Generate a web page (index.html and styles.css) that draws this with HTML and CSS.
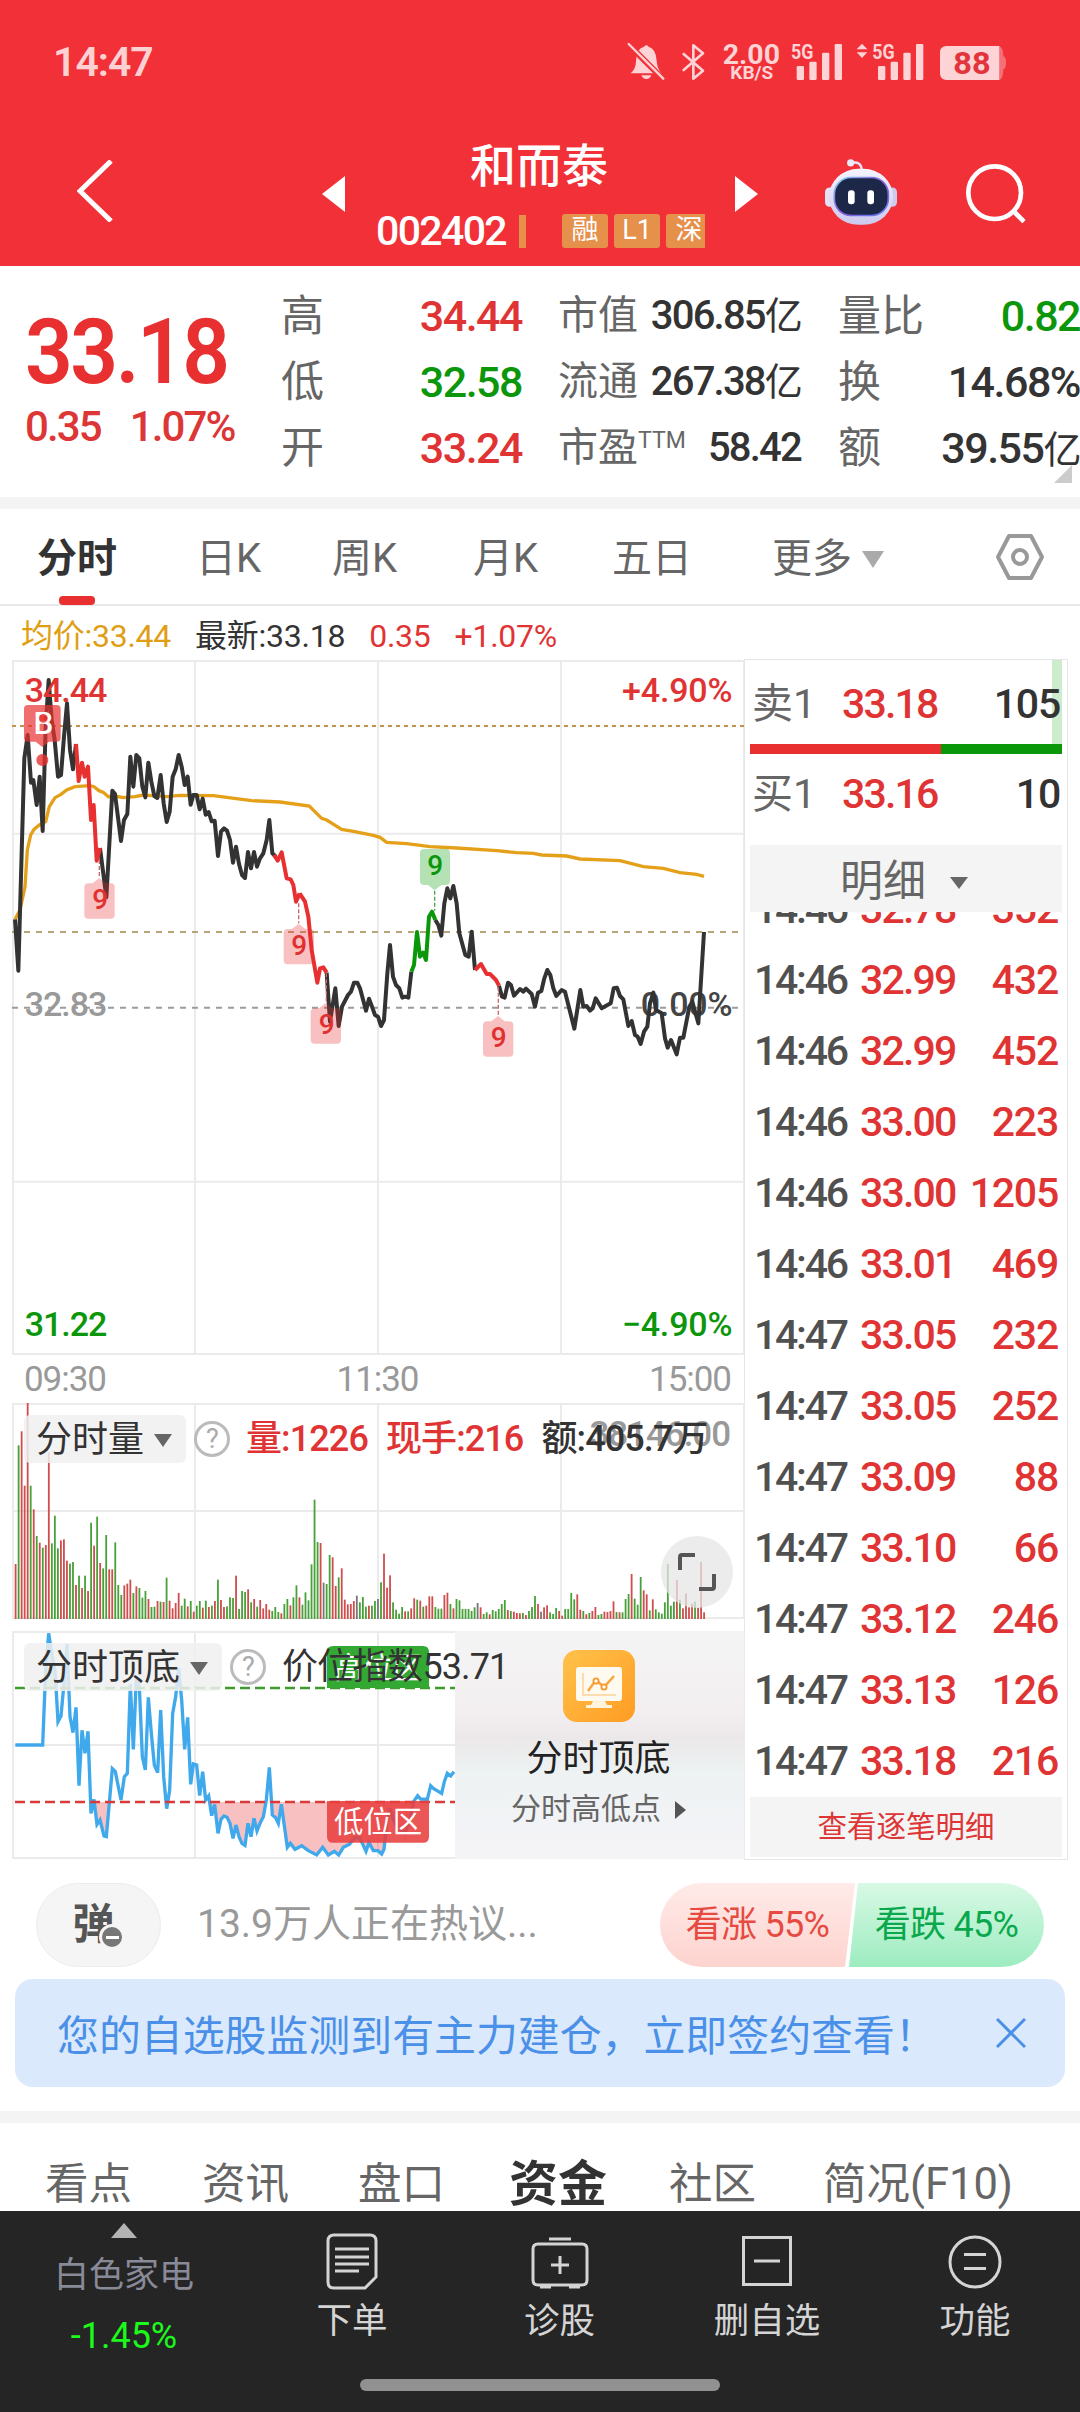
FILE: index.html
```html
<!DOCTYPE html>
<html lang="zh-CN">
<head>
  <meta charset="UTF-8">
  <title>和而泰 002402</title>
  <link rel="stylesheet" href="styles.css">
</head>
<body>

  <!-- Header -->
  <header class="header">
    <div class="status-bar">
      <span class="clock">14:47</span>
      <svg class="status-icons" viewBox="0 0 1230 210">
        <g class="soft">
          <path d="M62 130 Q78 116 78 92 Q80 54 102 50 Q109 42 116 50 Q138 56 140 92 Q142 116 154 130 Z"/>
          <path d="M94 136 H124 Q120 147 109 147 Q98 147 94 136 Z"/>
        </g>
        <path d="M50 38 L162 150" stroke="#f13038" stroke-width="18"/>
        <path class="soft-line" d="M56 42 L160 146" stroke-width="7"/>
        <path class="soft-line" d="M221 72 L279 122 L250 146 V46 L279 70 L221 120" stroke-width="8"/>
        <g class="soft">
          <text x="338" y="101" font-size="82" textLength="172" lengthAdjust="spacingAndGlyphs">2.00</text>
          <text x="361" y="148" font-size="54" textLength="129" lengthAdjust="spacingAndGlyphs">KB/S</text>
          <text x="543" y="87" font-size="60" textLength="67" lengthAdjust="spacingAndGlyphs">5G</text>
          <rect x="560" y="108" width="22" height="42" rx="4"/>
          <rect x="598" y="95" width="22" height="55" rx="4"/>
          <rect x="636" y="68" width="22" height="82" rx="4"/>
          <rect x="674" y="42" width="22" height="108" rx="4"/>
          <path d="M756 41 L772 58 H740 Z M756 84 L772 67 H740 Z"/>
          <text x="787" y="87" font-size="60" textLength="67" lengthAdjust="spacingAndGlyphs">5G</text>
          <rect x="804" y="108" width="22" height="42" rx="4"/>
          <rect x="842" y="95" width="22" height="55" rx="4"/>
          <rect x="880" y="68" width="22" height="82" rx="4"/>
          <rect x="918" y="42" width="22" height="108" rx="4"/>
          <path d="M1010 48 H1168 V150 H1010 Q990 150 990 130 V68 Q990 48 1010 48 Z"/>
          <path opacity=".4" d="M1168 48 Q1180 54 1180 78 Q1188 80 1188 98 Q1188 116 1180 118 Q1180 146 1168 150 Z"/>
        </g>
        <text x="1030" y="133" font-size="92" fill="#e2343b" font-weight="700" textLength="112" lengthAdjust="spacingAndGlyphs">88</text>
      </svg>
    </div>
    <div class="title-bar">
      <svg class="back" viewBox="0 0 36 62"><path d="M34 1 L3 31 L34 61"/></svg>
      <span class="arrow-left"></span>
      <div class="stock">
        <h1>和而泰</h1>
        <div class="stock-code">
          <span class="num">002402</span>
          <i class="code-bar"></i>
          <div class="tags"><b>融</b><b>L1</b><b>深</b></div>
        </div>
      </div>
      <span class="arrow-right"></span>
      <svg class="robot" viewBox="0 0 216 200">
        <defs>
          <linearGradient id="shell" x1="0" y1="0" x2="0" y2="1">
            <stop offset="0" stop-color="#f4f3fd"/>
            <stop offset="1" stop-color="#cdc9ee"/>
          </linearGradient>
          <linearGradient id="rim" x1="0" y1="0" x2="1" y2="1">
            <stop offset="0" stop-color="#7fd0f0"/>
            <stop offset=".5" stop-color="#8b5ae0"/>
            <stop offset="1" stop-color="#5f7df0"/>
          </linearGradient>
        </defs>
        <path d="M78 14 Q110 8 110 36" fill="none" stroke="#e6e2f8" stroke-width="7"/>
        <circle cx="77" cy="14" r="11" fill="#eceafa"/>
        <rect x="0" y="88" width="30" height="58" rx="14" fill="#e4e1f6"/>
        <rect x="186" y="88" width="30" height="58" rx="14" fill="#cfcbf0"/>
        <rect x="12" y="32" width="192" height="168" rx="88" fill="url(#shell)"/>
        <rect x="28" y="58" width="162" height="114" rx="50" fill="#1d2747" stroke="url(#rim)" stroke-width="5"/>
        <rect x="69" y="96" width="20" height="42" rx="9" fill="#fff"/>
        <rect x="127" y="96" width="20" height="42" rx="9" fill="#fff"/>
      </svg>
      <svg class="search" viewBox="0 0 180 180">
        <circle cx="86" cy="86" r="79"/>
        <path d="M143 142 L174 173"/>
      </svg>
    </div>
  </header>

  <!-- Quote -->
  <section class="quote">
    <div class="price-box">
      <div class="price num">33.18</div>
      <div class="change num"><span>0.35</span><span>1.07%</span></div>
    </div>
    <dl class="stats stats-a">
      <dt>高</dt><dd class="red">34.44</dd>
      <dt>低</dt><dd class="green">32.58</dd>
      <dt>开</dt><dd class="red">33.24</dd>
    </dl>
    <dl class="stats stats-b">
      <dt>市值</dt><dd>306.85<small>亿</small></dd>
      <dt>流通</dt><dd>267.38<small>亿</small></dd>
      <dt>市盈<sup>TTM</sup></dt><dd>58.42</dd>
    </dl>
    <dl class="stats stats-c">
      <dt>量比</dt><dd class="green">0.82</dd>
      <dt>换</dt><dd>14.68%</dd>
      <dt>额</dt><dd>39.55<small>亿</small></dd>
    </dl>
    <i class="corner"></i>
  </section>

  <nav class="period-tabs">
    <span class="active">分时</span>
    <span>日K</span>
    <span>周K</span>
    <span>月K</span>
    <span>五日</span>
    <span>更多<i class="caret"></i></span>
    <svg class="hex" viewBox="0 0 48 46">
      <path d="M13 2 H35 L46 23 L35 44 H13 L2 23 Z"/>
      <circle cx="24" cy="23" r="7"/>
    </svg>
  </nav>

  <div class="legend">
    <span class="gold">均价:33.44</span>
    <span>最新:33.18</span>
    <span class="red">0.35</span>
    <span class="red">+1.07%</span>
  </div>

  <!-- Charts and order book -->
  <main class="board">
    <div class="charts">
      <svg class="chart-price" viewBox="36 60 2199 2085">
        <g class="grid">
          <path d="M39 63 H2232 V2142 H39 Z M585 63 V2142 M1134 63 V2142 M1683 63 V2142 M39 581 H2232 M39 1625 H2232"/>
        </g>
        <path class="dash" d="M36 258 H2232" stroke="#c5914f" stroke-dasharray="12 12"/>
        <path class="dash" d="M36 876 H2220" stroke="#b8a479" stroke-dasharray="18 18"/>
        <path class="dash" d="M36 1103 H2220" stroke="#9c9c9c" stroke-dasharray="18 18"/>
        <text x="74" y="1128" fill="#999">32.83</text>
        <text class="pct" x="2197" y="1128" fill="#444">0.00%</text>

        <polyline class="avg" points="45,838 60,810 75,740 82,630 92,585 102,568 118,555 137,545 148,500 165,473 183,463 200,450 225,440 270,437 282,440 297,452 310,457 325,470 345,468 370,473 405,470 430,465 455,467 500,470 540,466 640,467 680,472 755,482 840,486 928,498 965,535 980,540 1025,568 1060,574 1120,586 1140,592 1160,607 1220,611 1290,620 1370,624 1490,632 1550,638 1600,640 1625,645 1700,648 1740,657 1860,662 1930,680 1990,685 2040,698 2090,703 2112,709"/>
        <g class="line">
          <polyline points="45,838 55,992 73,355 83,285 93,428 100,420 110,495 119,410 128,573 137,260 146,120 155,240 164,300 174,410 183,405 192,290 201,190 210,330 219,388 228,312"/>
          <polyline points="300,624 319,772 337,452 345,462 363,603 372,540 382,522 391,350 400,440 409,345 418,355 427,440 436,472 445,368 454,425 463,468 472,474 482,405 491,490 500,546 509,515 518,410 527,388 536,345 545,380 554,435 563,410 572,494 580,465 590,465 599,508 608,476 617,524 626,516 635,544 644,542 654,648 663,575 672,565 681,572 690,600 699,668 708,620 717,672 726,705 735,714 744,636 753,685 762,636 771,680 780,655 790,640 800,600 808,540 817,640 828,650"/>
          <polyline points="980,998 990,1145 1006,1045 1016,1158 1026,1100 1044,1065 1053,1055 1062,1028 1072,1028 1080,1045 1098,1112 1107,1076 1116,1100 1125,1125 1134,1130 1143,1158 1152,1140 1162,1000 1170,915 1179,1010 1188,1035 1198,1045 1207,1073 1216,1070 1225,1073 1234,995"/>
          <polyline points="1306,840 1315,855 1324,887 1333,790 1342,745 1351,775 1360,738 1370,790 1378,880 1396,945 1406,950 1415,875 1425,990"/>
          <polyline points="1497,1037 1506,1070 1514,1073 1524,1028 1533,1035 1542,1067 1560,1047 1570,1055 1578,1046 1595,1062 1605,1100 1614,1058 1624,1053 1633,1015 1642,990 1651,1005 1660,1045 1669,1068 1685,1050 1695,1055 1723,1166 1741,1050 1750,1100 1760,1098 1770,1112 1778,1105 1787,1075 1805,1105 1832,1090 1841,1045 1851,1043 1860,1068 1870,1078 1885,1158 1895,1143 1905,1185 1913,1190 1922,1212 1932,1175 1942,1160 1950,1090 1960,1058 1968,1110 1985,1120 1995,1195 2003,1223 2013,1200 2030,1243 2040,1193 2050,1193 2068,1100 2077,1085 2095,1150 2112,876"/>
          <g class="down">
            <polyline points="228,312 236,423 246,368 254,410 264,380 273,540 281,495 290,662 300,624"/>
            <polyline points="822,645 833,662 845,637 860,715 872,718 880,735 888,785 899,760"/>
            <polyline points="899,760 915,785 925,830 935,930 952,1028 960,985 970,982 980,998"/>
            <polyline points="1425,990 1443,972 1460,1002 1470,1002 1488,1020 1497,1037"/>
          </g>
          <polyline class="up" points="1234,995 1242,975 1251,876 1260,950 1269,938 1278,960 1287,830 1296,815 1306,840"/>
        </g>

        <text x="74" y="187" fill="#e03434">34.44</text>
        <text class="pct" x="2197" y="187" fill="#e03434">+4.90%</text>
        <text x="74" y="2087" fill="#0b960b">31.22</text>
        <text class="pct" x="2197" y="2087" fill="#0b960b">−4.90%</text>

        <!-- buy marker -->
        <g fill="#e83030">
          <path opacity=".7" d="M84 195 H170 Q182 195 182 207 V293 Q182 305 170 305 H147 L127 321 L107 305 H84 Q72 305 72 293 V207 Q72 195 84 195 Z"/>
          <circle cx="127" cy="360" r="18" opacity=".8"/>
        </g>
        <text x="129" y="281" fill="#fff" font-size="94" text-anchor="middle">B</text>
        <circle cx="130" cy="235" r="13" fill="#e83030" opacity=".8"/>

        <!-- nine-turn markers -->
        <g class="nine nine-red">
          <path class="stem" d="M298 660 V714 M896 790 V850 M979 1000 V1090 M1495 1040 V1126"/>
          <path d="M265 730 H278 L298 714 L318 730 H332 Q344 730 344 742 V824 Q344 836 332 836 H265 Q253 836 253 824 V742 Q253 730 265 730 Z"/>
          <path transform="translate(598 137)" d="M265 730 H278 L298 714 L318 730 H332 Q344 730 344 742 V824 Q344 836 332 836 H265 Q253 836 253 824 V742 Q253 730 265 730 Z"/>
          <path transform="translate(679 375)" d="M265 730 H278 L298 714 L318 730 H332 Q344 730 344 742 V824 Q344 836 332 836 H265 Q253 836 253 824 V742 Q253 730 265 730 Z"/>
          <path transform="translate(1196 414)" d="M265 730 H278 L298 714 L318 730 H332 Q344 730 344 742 V824 Q344 836 332 836 H265 Q253 836 253 824 V742 Q253 730 265 730 Z"/>
          <text x="299" y="808">9</text>
          <text x="896" y="945">9</text>
          <text x="979" y="1183">9</text>
          <text x="1495" y="1222">9</text>
        </g>
        <g class="nine nine-green">
          <path class="stem" d="M1304 752 V812"/>
          <path d="M1272 627 H1338 Q1350 627 1350 639 V723 Q1350 735 1338 735 H1324 L1304 751 L1284 735 H1272 Q1260 735 1260 723 V639 Q1260 627 1272 627 Z"/>
          <text x="1304" y="706">9</text>
        </g>
      </svg>

      <div class="time-axis num"><span>09:30</span><span>11:30</span><span>15:00</span></div>

      <div class="panel volume">
        <svg id="volume" viewBox="12 1403 733 217">
          <path class="grid-thin" d="M13 1404 H744 V1618 H13 Z M195 1404 V1618 M378 1404 V1618 M561 1404 V1618 M13 1511 H744"/>
          <text x="730" y="1446" fill="#999" font-size="35" text-anchor="end">38146.00</text>
        </svg>
        <div class="panel-head">
          <button class="chip">分时量<i class="caret"></i></button>
          <span class="help">?</span>
          <span class="red">量:1226</span>
          <span class="red">现手:216</span>
          <span>额:405.7万</span>
        </div>
        <button class="expand" aria-label="全屏">
          <svg viewBox="0 0 38 38"><path d="M2 17 V4 Q2 2 4 2 H17 M36 21 V34 Q36 36 34 36 H21"/></svg>
        </button>
      </div>

      <div class="panel index">
        <svg viewBox="36 63 2199 684">
          <defs>
            <clipPath id="low"><rect x="0" y="576" width="1365" height="200"/></clipPath>
            <clipPath id="high"><rect x="0" y="0" width="1365" height="234"/></clipPath>
          </defs>
          <path class="grid" d="M39 66 H2232 V744 H39 Z M585 66 V744 M1134 66 V744 M39 405 H2232"/>
          <g clip-path="url(#low)">
            <polygon fill="#e83030" fill-opacity=".3" points="264,364 273,610 282,568 291,643 300,630 312,678 319,680 337,476 618,570 626,558 635,617 644,583 654,670 663,628 672,618 681,622 690,640 699,685 708,645 717,680 726,700 735,706 744,640 753,680 762,625 771,663 780,640 790,620 799,570 808,472 817,615 826,622 835,640 844,583 862,712 871,700 885,718 905,707 925,722 950,735 968,712 985,735 1003,724 1016,735 1030,712 1048,703 1065,682 1080,685 1098,724 1107,698 1120,722 1134,722 1145,732 1152,718 1160,640 1170,595 1180,630 1190,650 1215,670 1230,630 1241,570"/>
          </g>
          <g clip-path="url(#high)">
            <polygon fill="#2aa82a" fill-opacity=".35" points="128,405 137,180 146,70 155,130 165,180 174,335 183,318 192,220 201,102 210,320"/>
          </g>
          <polyline class="index-line" points="46,405 128,405 137,180 146,70 155,130 165,180 174,335 183,318 192,220 201,102 210,320 219,368 228,292 237,527 246,361 255,430 264,364 273,610 282,568 291,643 300,630 312,678 319,680 337,476 346,485 363,570 373,500 382,490 391,222 400,418 409,200 418,230 427,440 436,480 445,262 454,370 463,465 473,488 482,300 491,500 500,596 509,540 518,310 527,260 536,175 545,270 554,418 563,322 572,523 580,462 590,465 599,557 608,485 617,570 626,558 635,617 644,583 654,670 663,628 672,618 681,622 690,640 699,685 708,645 717,680 726,700 735,706 744,640 753,680 762,625 771,663 780,640 790,620 799,570 808,472 817,615 826,622 835,640 844,583 862,712 871,700 885,718 905,707 925,722 950,735 968,712 985,735 1003,724 1016,735 1030,712 1048,703 1065,682 1080,685 1098,724 1107,698 1120,722 1134,722 1145,732 1152,718 1160,640 1170,595 1180,630 1190,650 1215,670 1230,630 1241,575 1253,557 1262,567 1282,568 1292,527 1300,535 1325,550 1333,515 1342,490 1352,498 1362,485"/>
          <path d="M45 234 H1365" stroke="#3f9a2c" stroke-width="8" stroke-dasharray="30 15"/>
          <path d="M45 576 H1365" stroke="#d93a3a" stroke-width="8" stroke-dasharray="30 15"/>
          <path fill="#33a933" d="M999 108 H1269 Q1287 108 1287 126 V234 H981 V126 Q981 108 999 108 Z"/>
          <path fill="#e83f3f" fill-opacity=".88" d="M981 573 H1287 V680 Q1287 698 1269 698 H999 Q981 698 981 680 Z"/>
          <text class="zone" x="1134" y="203">高位区</text>
          <text class="zone" x="1134" y="665">低位区</text>
        </svg>
        <div class="promo">
          <svg class="promo-icon" viewBox="0 0 72 72">
            <defs>
              <linearGradient id="orange" x1="0" y1="0" x2="1" y2="1">
                <stop offset="0" stop-color="#ffc24a"/>
                <stop offset="1" stop-color="#ff9c24"/>
              </linearGradient>
            </defs>
            <rect width="72" height="72" rx="14" fill="url(#orange)"/>
            <rect x="13" y="17" width="46" height="34" rx="3" fill="#fffaf0"/>
            <path d="M30 51 H42 L44 55 H49 V58 H23 V55 H28 Z" fill="#fff3dc"/>
            <path d="M20 23 V45 H53" fill="none" stroke="#fcdcae" stroke-width="2"/>
            <path d="M25 41 L33 30 L41 37 L51 26" fill="none" stroke="#f7a63c" stroke-width="2.5"/>
            <circle cx="33" cy="31" r="2.6" fill="#fff" stroke="#f59a2a" stroke-width="1.8"/>
            <circle cx="41" cy="37" r="2.6" fill="#fff" stroke="#f59a2a" stroke-width="1.8"/>
          </svg>
          <div class="promo-title">分时顶底</div>
          <div class="promo-sub">分时高低点<i></i></div>
        </div>
        <div class="panel-head">
          <button class="chip">分时顶底<i class="caret"></i></button>
          <span class="help">?</span>
          <span class="plain">价位指数53.71</span>
        </div>
      </div>
    </div>

    <aside class="book num">
      <div class="level sell"><span>卖1</span><b>33.18</b><em>105</em></div>
      <div class="ratio"><i></i></div>
      <div class="level buy"><span>买1</span><b>33.16</b><em>10</em></div>
      <div class="detail-head">明细<i class="caret"></i></div>
      <div class="ticks">
        <div class="tick"><span>14:46</span><b>32.78</b><b>352</b></div>
        <div class="tick"><span>14:46</span><b>32.99</b><b>432</b></div>
        <div class="tick"><span>14:46</span><b>32.99</b><b>452</b></div>
        <div class="tick"><span>14:46</span><b>33.00</b><b>223</b></div>
        <div class="tick"><span>14:46</span><b>33.00</b><b>1205</b></div>
        <div class="tick"><span>14:46</span><b>33.01</b><b>469</b></div>
        <div class="tick"><span>14:47</span><b>33.05</b><b>232</b></div>
        <div class="tick"><span>14:47</span><b>33.05</b><b>252</b></div>
        <div class="tick"><span>14:47</span><b>33.09</b><b>88</b></div>
        <div class="tick"><span>14:47</span><b>33.10</b><b>66</b></div>
        <div class="tick"><span>14:47</span><b>33.12</b><b>246</b></div>
        <div class="tick"><span>14:47</span><b>33.13</b><b>126</b></div>
        <div class="tick"><span>14:47</span><b>33.18</b><b>216</b></div>
      </div>
      <a class="more">查看逐笔明细</a>
    </aside>
  </main>

  <!-- Discussion -->
  <section class="discuss">
    <button class="danmu">弹<i></i></button>
    <span class="hint">13.9万人正在热议...</span>
    <div class="vote">
      <span class="vote-up">看涨 55%</span>
      <span class="vote-down">看跌 45%</span>
    </div>
  </section>

  <div class="banner">
    <span>您的自选股监测到有主力建仓，立即签约查看！</span>
    <svg viewBox="0 0 30 30"><path d="M1 1 L29 29 M29 1 L1 29"/></svg>
  </div>

  <nav class="info-tabs">
    <span>看点</span>
    <span>资讯</span>
    <span>盘口</span>
    <span class="active">资金</span>
    <span>社区</span>
    <span>简况(F10)</span>
  </nav>

  <!-- Bottom bar -->
  <footer class="bottom">
    <div class="sector">
      <i></i>
      <span>白色家电</span>
      <b>-1.45%</b>
    </div>
    <div class="action">
      <svg viewBox="0 0 60 60"><path d="M12 4 H48 Q54 4 54 10 V46 L43 57 H12 Q6 57 6 51 V10 Q6 4 12 4 Z M13 18 H47 M13 26 H47 M13 33 H47 M13 40 H37"/></svg>
      <span>下单</span>
    </div>
    <div class="action">
      <svg viewBox="0 0 60 60"><path d="M8 13 H52 Q57 13 57 18 V49 Q57 54 52 54 H8 Q3 54 3 49 V18 Q3 13 8 13 Z M19 8 H41 M30 25 V43 M21 34 H39 M10 56 H21 M39 56 H50"/></svg>
      <span>诊股</span>
    </div>
    <div class="action">
      <svg viewBox="0 0 60 60"><path d="M6.500 6.500 H53.500 V53.500 H6.500 Z M17 30 H43"/></svg>
      <span>删自选</span>
    </div>
    <div class="action">
      <svg viewBox="0 0 60 60"><circle cx="30" cy="31" r="25"/><path d="M19 23.500 H41 M19 37.500 H41"/></svg>
      <span>功能</span>
    </div>
    <div class="home-bar"></div>
  </footer>

  <script src="script.js"></script>
</body>
</html>
```

FILE: styles.css
```css
* { margin: 0; padding: 0; box-sizing: border-box; }

body {
  width: 1080px;
  height: 2412px;
  overflow: hidden;
  background: #fff;
  color: #333;
  font-family: Roboto, "Noto Sans CJK SC", sans-serif;
  display: flex;
  flex-direction: column;
}

svg { display: block; }
button { border: none; background: none; font: inherit; color: inherit; }
i, em { font-style: normal; }
.num { letter-spacing: -0.03em; }
.red { color: #e03434; }
.green { color: #0b960b; }
.gold { color: #e09e14; }

.caret {
  display: inline-block;
  border-left: 9px solid transparent;
  border-right: 9px solid transparent;
  border-top: 13px solid #666;
}

/* Header */
.header { height: 266px; background: #f13038; color: #fff; }

.status-bar {
  height: 110px;
  padding: 30px 60px 0 53px;
  display: flex;
  justify-content: space-between;
}

.clock {
  font-size: 41px;
  font-weight: 600;
  line-height: 64px;
  letter-spacing: -0.025em;
  color: #fdd0d3;
}

.status-icons { width: 410px; height: 70px; font-weight: 700; }
.soft { fill: #fdd3d5; }
.soft-line { fill: none; stroke: #fdd3d5; stroke-linejoin: round; stroke-linecap: round; }

.title-bar {
  height: 156px;
  display: grid;
  grid-template-columns: 245px 24px 389px 24px 66px 72px 69px 60px;
  padding-left: 77px;
  align-items: start;
}

.back { width: 36px; height: 62px; margin-top: 50px; fill: none; stroke: #fff; stroke-width: 5; }

.arrow-left, .arrow-right {
  width: 23px;
  height: 36px;
  margin-top: 66px;
  background: #fff;
  clip-path: polygon(0 50%, 100% 0, 100% 100%);
}
.arrow-right { clip-path: polygon(0 0, 100% 50%, 0 100%); }

.stock { padding-top: 25px; }
.stock h1 { font-size: 46px; font-weight: 500; line-height: 62px; text-align: center; padding-right: 3px; }

.stock-code { display: flex; align-items: center; height: 50px; padding: 4px 0 0 30px; margin-top: 7px; }
.stock-code .num { font-size: 41px; font-weight: 500; letter-spacing: -0.04em; width: 143px; }
.code-bar { width: 7px; height: 33px; background: #e5904b; margin-right: 36px; }
.tags { display: flex; gap: 6px; width: 143px; overflow: hidden; }
.tags b {
  flex: none;
  width: 46px;
  height: 34px;
  border-radius: 3px;
  background: #e5904b;
  font-size: 27px;
  font-weight: 400;
  line-height: 33px;
  text-align: center;
}

.robot { grid-column: 6; width: 72px; height: 67px; margin-top: 48px; }
.search { grid-column: 8; width: 60px; height: 60px; margin-top: 54px; fill: none; stroke: #fff; stroke-width: 14; }

/* Quote */
.quote {
  position: relative;
  height: 243px;
  border-bottom: 12px solid #f4f4f4;
  padding: 17px 0 0 25px;
  display: flex;
  overflow: hidden;
}

.price-box { width: 256px; color: #e83030; }
.price {
  font-size: 91px;
  font-weight: 600;
  line-height: 100px;
  margin-top: 19px;
  transform: scaleX(.92);
  transform-origin: left;
}
.change { display: flex; gap: 29px; font-size: 42px; font-weight: 500; line-height: 46px; margin-top: 2px; color: #dd3636; letter-spacing: -0.045em; }

.stats {
  display: grid;
  grid-template-columns: 0 1fr;
  grid-auto-rows: 66px;
  line-height: 66px;
  font-size: 43px;
}
.stats dt { color: #666; white-space: nowrap; }
.stats dd { text-align: right; font-weight: 500; letter-spacing: -0.035em; white-space: nowrap; }
.stats small { font-size: 38px; font-weight: 400; }
.stats-a { width: 241px; margin-right: 36px; }
.stats-b { width: 243px; margin-right: 37px; font-size: 40px; }
.stats-b dd { letter-spacing: -0.045em; }
.stats-b sup { font-size: 23px; line-height: 0; vertical-align: 13px; }
.stats-c { width: 242px; }

.corner {
  position: absolute;
  right: 8px;
  bottom: 14px;
  width: 18px;
  height: 18px;
  background: #ccc;
  clip-path: polygon(100% 0, 100% 100%, 0 100%);
}

/* Period tabs */
.period-tabs {
  height: 97px;
  padding-left: 37px;
  border-bottom: 2px solid #e9e9e9;
  display: grid;
  grid-template-columns: 159px 136px 141px 139px 160px 224px 48px;
  font-size: 40px;
  line-height: 99px;
  color: #666;
}
.period-tabs .active { font-weight: 700; color: #333; width: 80px; }
.period-tabs .active::after {
  content: "";
  display: block;
  width: 36px;
  height: 9px;
  margin: -12px auto 0;
  border-radius: 4px;
  background: #e83030;
}
.period-tabs .caret { border-width: 17px 11px 0; border-top-color: #aaa; margin-left: 10px; vertical-align: 4px; }
.hex { width: 48px; height: 46px; margin-top: 25px; fill: none; stroke: #999; stroke-width: 4; stroke-linejoin: round; }

.legend { height: 53px; padding-left: 21px; display: flex; gap: 24px; font-size: 32px; line-height: 61px; letter-spacing: -0.008em; }

/* Charts */
.board { display: flex; height: 1202px; padding-left: 12px; }
.charts { width: 732px; padding-top: 1px; }
.charts text { letter-spacing: -0.03em; font-weight: 500; }
.grid, .grid-thin { fill: none; stroke: #ebebeb; stroke-width: 6; }
.grid-thin { stroke-width: 2; }

.chart-price { width: 733px; height: 695px; font-size: 102px; }
.charts .pct { text-anchor: end; letter-spacing: -0.005em; }
.dash { stroke-width: 6; }
.avg { fill: none; stroke: #e5a01a; stroke-width: 10; }
.line { fill: none; stroke: #333; stroke-width: 12; stroke-linejoin: round; }
.down { stroke: #e83030; }
.up { stroke: #0a980a; }
.nine { font-size: 84px; text-anchor: middle; }
.nine-red { fill: rgba(232, 48, 48, .3); }
.nine-red text { fill: #e03030; }
.nine-green { fill: rgba(10, 160, 10, .3); }
.nine-green text { fill: #0a960a; }
.stem { stroke: #c66; stroke-width: 4; stroke-dasharray: 12 6; }
.nine-green .stem { stroke: #4a4; }

.time-axis {
  display: flex;
  justify-content: space-between;
  height: 48px;
  padding: 0 13px 0 12px;
  color: #999;
  font-size: 35px;
  line-height: 50px;
}

.panel { position: relative; width: 733px; }
.volume { height: 217px; }
.index { height: 228px; margin-top: 11px; }

.panel-head {
  position: absolute;
  left: 12px;
  top: 12px;
  display: flex;
  align-items: center;
  height: 48px;
  font-size: 36px;
  letter-spacing: -0.025em;
  font-weight: 500;
  line-height: 46px;
  white-space: nowrap;
}
.panel-head span + span { margin-left: 18px; }
.panel-head .help + span { margin-left: 16px; }
.panel-head .plain { font-weight: 400; }
.chip {
  height: 48px;
  padding: 0 14px 0 12px;
  border-radius: 6px;
  background: rgba(240, 240, 240, .85);
  font-weight: 400;
  line-height: 50px;
  letter-spacing: 0;
}
.chip .caret { margin-left: 10px; vertical-align: 5px; }
.help {
  width: 36px;
  height: 36px;
  margin: 0 0 0 8px;
  border: 3px solid #bbb;
  border-radius: 50%;
  color: #aaa;
  font-size: 27px;
  font-weight: 400;
  line-height: 31px;
  text-align: center;
}

.expand {
  position: absolute;
  left: 649px;
  top: 133px;
  width: 72px;
  height: 72px;
  padding: 17px;
  border-radius: 50%;
  background: rgba(230, 230, 230, .75);
}
.expand svg { fill: none; stroke: #555; stroke-width: 4; }

.index-line { fill: none; stroke: #3fa9ec; stroke-width: 10; }
.charts .zone { fill: #fff; font-size: 88px; font-weight: 400; letter-spacing: 0; text-anchor: middle; }

.promo {
  position: absolute;
  left: 443px;
  top: 0;
  width: 289px;
  height: 228px;
  padding: 19px 2px 0 0;
  display: flex;
  flex-direction: column;
  align-items: center;
  background: linear-gradient(#f4f4f5, #f3eff1 35%, #ece8ea 47%, #edf2f2 62%, #f2f3f6 85%, #f5f4f6);
}
.promo-icon { width: 72px; height: 72px; }
.promo-title { margin-top: 11px; font-size: 36px; line-height: 52px; color: #222; }
.promo-sub { font-size: 30px; line-height: 48px; color: #666; }
.promo-sub i {
  display: inline-block;
  margin-left: 14px;
  border-left: 11px solid #555;
  border-top: 9px solid transparent;
  border-bottom: 9px solid transparent;
}

/* Order book */
.book {
  width: 324px;
  height: 1201px;
  border: 1px solid #e6e6e6;
  padding: 0 5px 0 5px;
  font-size: 41px;
  display: flex;
  flex-direction: column;
}
.level {
  display: grid;
  grid-template-columns: 90px 110px 1fr;
  height: 84px;
  padding: 4px 2px 0 2px;
  line-height: 80px;
}
.level span { color: #666; letter-spacing: 0; }
.level b, .tick b { color: #e03434; font-weight: 500; letter-spacing: -0.045em; }
.level em { text-align: right; font-weight: 500; }
.sell { background: linear-gradient(#cdebcd, #cdebcd) right / 10px 100% no-repeat; }
.buy { height: 91px; padding-top: 0; }
.ratio { height: 10px; background: #0a980a; }
.ratio i { display: block; width: 191px; height: 10px; background: #e83030; }

.detail-head {
  height: 67px;
  background: #f4f4f4;
  color: #666;
  font-size: 43px;
  line-height: 73px;
  padding-left: 90px;
  letter-spacing: 0;
}
.detail-head .caret { margin-left: 24px; vertical-align: 7px; border-top-width: 12px; }

.ticks { height: 885px; overflow: hidden; padding-top: 1px; display: flex; flex-direction: column; justify-content: flex-end; }
.tick {
  flex: none;
  height: 71px;
  padding: 0 4px 0 4px;
  display: grid;
  grid-template-columns: 106px 100px 1fr;
  line-height: 71px;
  color: #505050;
}
.tick span { font-weight: 500; letter-spacing: -0.055em; }
.tick b:last-child { text-align: right; letter-spacing: -0.03em; }

.more {
  height: 60px;
  background: #f4f4f4;
  color: #dd3636;
  font-size: 29.500px;
  line-height: 60px;
  letter-spacing: 0;
  text-align: center;
}

/* Discussion */
.discuss { display: flex; align-items: center; height: 84px; margin-top: 22px; padding: 0 36px; }
.danmu {
  position: relative;
  width: 125px;
  height: 84px;
  padding-right: 10px;
  border: 1px solid #ececec;
  border-radius: 42px;
  background: #f5f5f5;
  color: #555;
  font-size: 42px;
  font-weight: 700;
  line-height: 76px;
  text-align: center;
}
.danmu i {
  position: absolute;
  left: 62px;
  top: 40px;
  width: 26px;
  height: 26px;
  border: 3px solid #f5f5f5;
  border-radius: 50%;
  background: linear-gradient(#fff, #fff) center / 13px 3px no-repeat #777;
}
.hint { margin-left: 36px; color: #999; font-size: 39px; line-height: 80px; padding-bottom: 2px; }

.vote { display: flex; width: 384px; height: 84px; margin-left: auto; font-size: 36px; line-height: 85px; text-align: center; letter-spacing: -0.02em; }
.vote-up, .vote-down { width: 195px; }
.vote-up {
  border-radius: 42px 0 0 42px;
  background: linear-gradient(#ffebe9, #fdd3ce);
  color: #e64a40;
  clip-path: polygon(0 0, 100% 0, 185px 100%, 0 100%);
}
.vote-down {
  margin-left: -6px;
  border-radius: 0 42px 42px 0;
  background: linear-gradient(#d8f9e5, #9decc0);
  color: #0aa84c;
  clip-path: polygon(9px 0, 100% 0, 100% 100%, 0 100%);
}

.banner {
  display: flex;
  justify-content: space-between;
  align-items: center;
  height: 108px;
  margin: 12px 15px 0 15px;
  padding: 0 39px 0 42px;
  border-radius: 18px;
  background: #dae9fc;
  color: #4a90e8;
  font-size: 41.900px;
}
.banner span { padding-bottom: 2px; }
.banner svg { width: 30px; height: 30px; fill: none; stroke: #4a90e8; stroke-width: 3; }

.info-tabs {
  height: 100px;
  margin-top: 24px;
  border-top: 12px solid #f4f4f4;
  padding-left: 45px;
  display: grid;
  grid-template-columns: 157px 156px 151px 160px 154px 1fr;
  color: #666;
  font-size: 43.500px;
  line-height: 123px;
}
.info-tabs .active { color: #333; font-size: 49px; font-weight: 700; }

/* Bottom bar */
.bottom {
  height: 201px;
  background: #252525;
  color: #d4d4d4;
  font-size: 35.500px;
  display: grid;
  grid-template-columns: 248px 208px 207px 208px 208px;
  grid-template-rows: 168px 12px;
}
.sector, .action { display: flex; flex-direction: column; align-items: center; }
.sector i {
  width: 26px;
  height: 15px;
  margin-top: 12px;
  background: #b4b4b4;
  clip-path: polygon(50% 0, 100% 100%, 0 100%);
}
.sector span { margin-top: 12px; line-height: 52px; color: #888a98; font-size: 35px; }
.sector b { margin-top: 12px; color: #1cfa1c; font-size: 36px; font-weight: 400; line-height: 44px; }
.action svg { width: 60px; height: 60px; margin-top: 20px; fill: none; stroke: #d4d4d4; stroke-width: 3; }
.action span { margin-top: 4px; line-height: 52px; }
.home-bar { grid-column: 1 / -1; justify-self: start; width: 360px; height: 12px; margin-left: 360px; border-radius: 6px; background: #919191; }
```

FILE: script.js
```js
// Per-minute volume, direction letter (r up, g down, k flat) + bar height
const volumes = 'r165 g521 r563 r400 r648 g400 r329 g249 r229 g214 r222 r500 g227 g310 g212 r236 r239 r175 g166 g171 r102 g130 r93 g130 r84 g289 r220 g307 r168 g152 g252 r149 r149 g230 g102 g72 r101 r106 r118 g78 r98 g93 g64 g84 r60 g36 g37 r54 g52 r51 g124 r55 r32 r48 r78 g40 g61 r38 g54 r22 g40 g54 r34 g55 r36 g40 r54 g118 r57 r36 g38 g65 g63 r130 g30 g84 g81 r89 g50 r60 g37 r57 r32 r45 r28 g24 g36 g21 r17 g45 g60 r41 g65 g101 r65 g43 g80 g56 g164 g358 g231 r228 k109 g105 g192 r185 r99 g125 r152 r58 r44 r45 r54 k70 g50 g66 g37 r40 g40 g54 k60 g110 r196 r94 r131 g50 g28 g16 g36 r23 g23 r32 r62 g58 r55 g37 r40 r68 r68 g36 g31 g31 r72 r79 g45 r32 g60 g56 g30 g30 g30 g24 g35 k48 r35 g15 g20 r14 g27 g23 g30 g45 g57 r27 g24 r22 r18 r17 g18 r12 g24 g36 g69 r45 k22 r35 r41 g20 g15 g33 r24 r10 g30 g30 g78 g59 r74 r28 g24 r14 g18 r24 r36 g12 g15 r22 r21 r24 r53 g21 r20 g20 g60 g75 r135 g61 g43 g126 r86 r74 g26 r59 g29 g20 g16 g50 g165 g40 g52 r117 g58 r32 r77 r35 r46 g53 r34 r171 r20'.split(' ');
const colors = { r: '#cf4d4d', g: '#48a038', k: '#777' };
const svg = document.getElementById('volume');
const step = 688.5 / (volumes.length - 1);

volumes.forEach((item, i) => {
  const height = Number(item.slice(1)) / 3;
  const bar = document.createElementNS('http://www.w3.org/2000/svg', 'rect');
  bar.setAttribute('x', 14.7 + i * step);
  bar.setAttribute('y', 1619 - height);
  bar.setAttribute('width', 1.8);
  bar.setAttribute('height', height);
  bar.setAttribute('fill', colors[item[0]]);
  svg.appendChild(bar);
});
```
